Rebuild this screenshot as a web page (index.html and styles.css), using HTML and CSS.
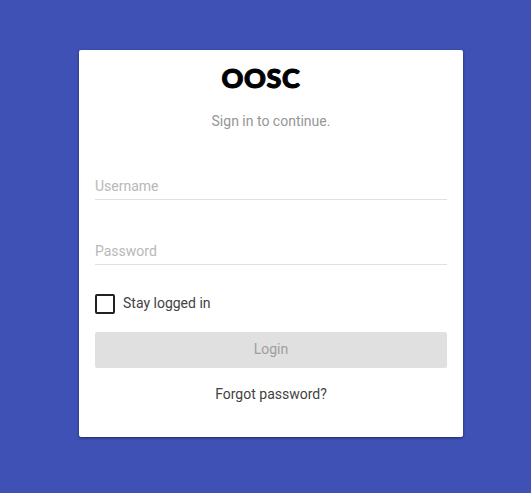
FILE: index.html
```html
<!DOCTYPE html>
<html lang="en">
<head>
<meta charset="utf-8">
<title>OOSC</title>
<link rel="stylesheet" href="styles.css">
</head>
<body>
<main class="card">
  <h1 class="brand">OOSC</h1>
  <p class="subtitle">Sign in to continue.</p>
  <form class="form">
    <input class="field" type="text" placeholder="Username">
    <input class="field" type="password" placeholder="Password">
    <label class="remember"><span class="box"></span><span class="remember-text">Stay logged in</span></label>
    <button class="login" type="button" disabled>Login</button>
    <a class="forgot">Forgot password?</a>
  </form>
</main>
</body>
</html>
```
FILE: styles.css
```css
* { box-sizing: border-box; }
body {
  margin: 0;
  height: 493px;
  padding: 50px 68px 0 79px;
  background: #3f51b5;
  font: 400 14px/20px Roboto, sans-serif;
  color: #424242;
}
.card {
  width: 384px;
  height: 387px;
  padding: 12px 16px 0;
  background: #fff;
  border-radius: 2px;
  box-shadow: 0 1px 3px rgba(0,0,0,.5);
  text-align: center;
}
.brand {
  margin: 0;
  padding-right: 20px;
  font: 900 27px/32px Lato, sans-serif;
  letter-spacing: .6px;
  color: #000;
  -webkit-text-stroke: 1px #000;
}
.subtitle { margin: 17px 0 0; color: #969696; }
.form { display: flex; flex-direction: column; margin-top: 42px; }
.field {
  height: 27px;
  margin-bottom: 38px;
  padding: 0 0 1px;
  border: 0;
  border-bottom: 1px solid #e0e0e0;
  outline: 0;
  font: inherit;
  background: none;
}
.field + .remember { margin-top: -9px; }
.field::placeholder { color: #b8b8b8; }
.remember { display: flex; align-items: center; gap: 8px; }
.remember-text { padding-bottom: 2px; line-height: 18px; }
.box { width: 20px; height: 20px; border: 2px solid #212121; border-radius: 2px; }
.login {
  height: 36px;
  margin-top: 18px;
  padding: 0 0 2px;
  border: 0;
  border-radius: 2px;
  background: #e0e0e0;
  color: #9e9e9e;
  font: inherit;
}
.forgot { margin-top: 16px; }
```
